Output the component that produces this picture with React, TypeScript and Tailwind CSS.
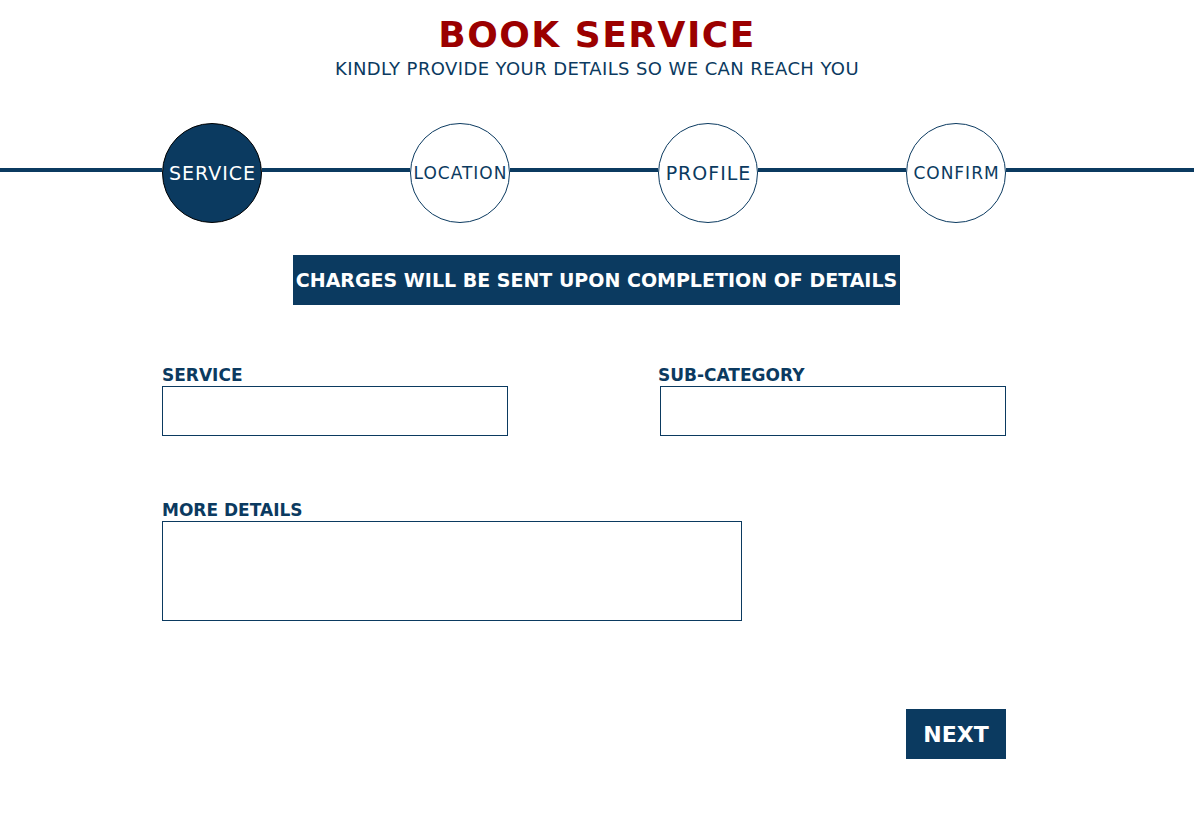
import React from "react";

const navy = "text-[#0b3a60]";

function Step({ label, active, size }: { label: string; active?: boolean; size: string }) {
  return (
    <div
      className={`w-[100px] h-[100px] rounded-full flex items-center justify-center shrink-0 ${
        active ? "bg-[#0b3a60] border border-black text-white" : "bg-white border border-[#0b3a60] text-[#0b3a60]"
      } ${size}`}
    >
      <span className="leading-none tracking-[1px] pl-[1px]">{label}</span>
    </div>
  );
}

function Seg({ cls }: { cls: string }) {
  return <div className={`h-[4px] mt-[45px] bg-[#0b3a60] ${cls}`} />;
}

export default function App() {
  return (
    <div className="w-[1194px] h-[834px] bg-white flex flex-col" style={{ fontFamily: '"DejaVu Sans", "Liberation Sans", sans-serif' }}>
      <h1 className="text-center text-[#9b0000] font-bold text-[36px] leading-none mt-[17px] tracking-[1.5px]">BOOK SERVICE</h1>
      <p className={`text-center ${navy} text-[18px] leading-none mt-[7px] tracking-[0.4px]`}>KINDLY PROVIDE YOUR DETAILS SO WE CAN REACH YOU</p>

      <div className="flex items-start mt-[45px] h-[100px]">
        <Seg cls="w-[162px]" />
        <Step label="SERVICE" active size="text-[19px]" />
        <Seg cls="w-[148px]" />
        <Step label="LOCATION" size="text-[17px]" />
        <Seg cls="w-[148px]" />
        <Step label="PROFILE" size="text-[19px]" />
        <Seg cls="w-[148px]" />
        <Step label="CONFIRM" size="text-[17px]" />
        <Seg cls="flex-1" />
      </div>

      <div className="flex justify-center mt-[32px]">
        <div className="bg-[#0b3a60] text-white font-bold text-[19px] h-[50px] px-[3px] flex items-center ml-[-1px]">
          CHARGES WILL BE SENT UPON COMPLETION OF DETAILS
        </div>
      </div>

      <div className="ml-[162px] w-[844px] flex flex-col">
        <div className="flex mt-[62px]">
          <div className="flex flex-col w-[346px]">
            <label className={`${navy} font-bold text-[17px] leading-none h-[19px]`}>SERVICE</label>
            <input className="w-[346px] h-[50px] border border-[#0b3a60] outline-none" />
          </div>
          <div className="flex flex-col ml-[152px]">
            <label className={`${navy} font-bold text-[17px] leading-none h-[19px] -ml-[2px]`}>SUB-CATEGORY</label>
            <input className="w-[346px] h-[50px] border border-[#0b3a60] outline-none" />
          </div>
        </div>

        <div className="flex flex-col mt-[66px]">
          <label className={`${navy} font-bold text-[17px] leading-none h-[19px]`}>MORE DETAILS</label>
          <textarea className="w-[580px] h-[100px] border border-[#0b3a60] outline-none resize-none" />
        </div>

        <div className="flex justify-end mt-[88px]">
          <button className="w-[100px] h-[50px] bg-[#0b3a60] text-white font-bold text-[22px] flex items-center justify-center">
            NEXT
          </button>
        </div>
      </div>
    </div>
  );
}
